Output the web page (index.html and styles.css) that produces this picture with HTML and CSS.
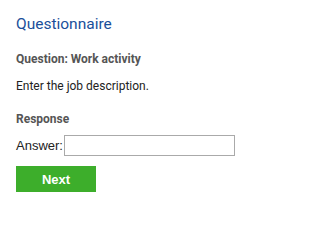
FILE: index.html
```html
<!DOCTYPE html>
<html>
<head>
<meta charset="utf-8">
<link rel="stylesheet" href="styles.css">
</head>
<body>
<div class="page">
  <h1 class="title">Questionnaire</h1>
  <h2 class="label q-label">Question: Work activity</h2>
  <p class="desc">Enter the job description.</p>
  <h2 class="label">Response</h2>
  <div class="answer-row">
    <label class="answer-label" for="ans">Answer:</label>
    <input class="answer-input" id="ans" type="text">
  </div>
  <button class="next-btn" type="button">Next</button>
</div>
</body>
</html>
```

FILE: styles.css
```css
html, body {
  margin: 0;
  padding: 0;
  background: #ffffff;
}
.page {
  padding: 15px 12px 0 16px;
  font-family: Roboto, "Liberation Sans", sans-serif;
  display: flex;
  flex-direction: column;
  align-items: flex-start;
}
.title {
  margin: 0;
  font-size: 15.5px;
  font-weight: 400;
  line-height: 18px;
  color: #1a4f9a;
}
.label {
  margin: 0;
  font-size: 12px;
  font-weight: 700;
  line-height: 14px;
  color: #555555;
}
.q-label {
  margin-top: 19px;
}
.desc {
  margin: 13px 0 0 0;
  font-size: 12px;
  line-height: 14px;
  color: #222222;
}
.desc + .label {
  margin-top: 19px;
}
.answer-row {
  margin-top: 9px;
  display: flex;
  align-items: center;
  gap: 1px;
  width: 219px;
}
.answer-label {
  font-family: "Liberation Sans", Arial, sans-serif;
  font-size: 13px;
  color: #222222;
}
.answer-input {
  flex: 1;
  min-width: 0;
  height: 21px;
  box-sizing: border-box;
  border: 1px solid #aaaaaa;
  margin: 0;
  padding: 0 3px;
}
.next-btn {
  margin-top: 10px;
  width: 80px;
  height: 26px;
  border: none;
  background: #3dae2b;
  color: #ffffff;
  font-family: "Liberation Sans", Arial, sans-serif;
  font-weight: 700;
  font-size: 13px;
  padding: 0;
}
```
